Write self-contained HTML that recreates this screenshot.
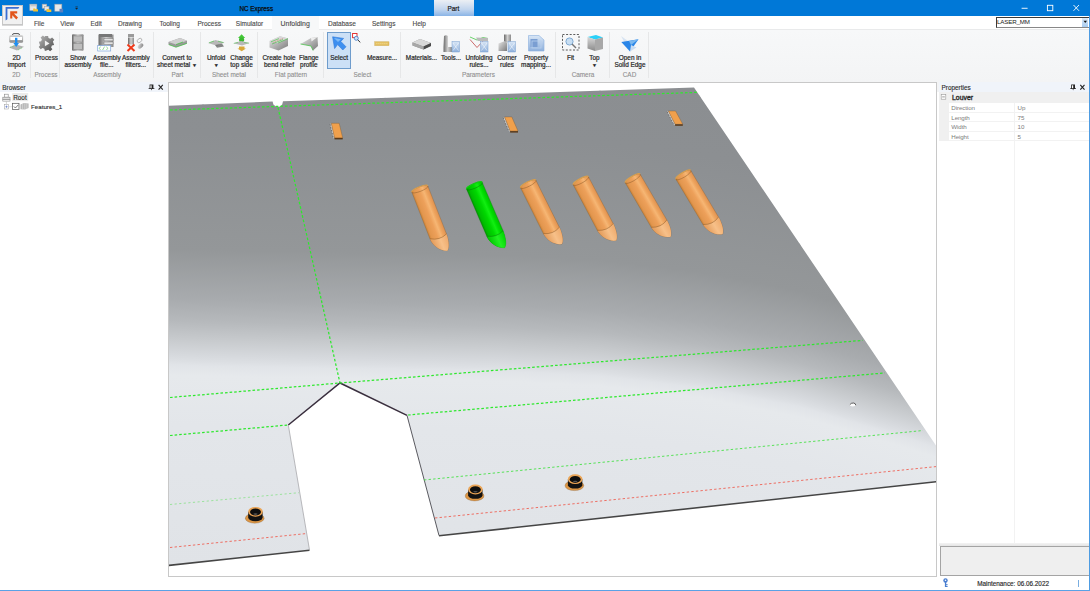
<!DOCTYPE html>
<html><head><meta charset="utf-8"><title>NC Express</title>
<style>*{margin:0;padding:0;box-sizing:border-box}
html,body{width:1090px;height:591px;overflow:hidden;background:#fff;font-family:"Liberation Sans",sans-serif;color:#333}
.a{position:absolute;white-space:nowrap;line-height:1}
svg.a{overflow:visible}</style></head><body>
<div class="a" style="left:0;top:0;width:1090px;height:16px;background:#0078d7"></div>
<div class="a" style="left:0;top:16px;width:1090px;height:13px;background:#fff"></div>
<div class="a" style="left:0;top:29px;width:1090px;height:53px;background:linear-gradient(#f7f8f9,#f3f4f5);border-top:1px solid #e9eaeb"></div>
<div class="a" style="left:2px;top:5px;width:21px;height:20px;background:#f1f1f1;border:1px solid #c6c6c6;box-shadow:0 1px 0 #d8d8d8"></div>
<svg class="a" style="left:0;top:0" width="90" height="30">
  <path d="M5.6 7 L19.4 7 L18.2 8.7 L7.4 8.7 L7.4 19.2 L5.6 20.6 Z" fill="#3b6fd3"/>
  <path d="M10.2 11.2 L17.2 11.2 L17.2 13.4 L13.9 13.4 L18 17.6 L16.3 19.4 L12.3 15.3 L12.3 18.6 L10.2 18.6 Z" fill="#e2561c"/>
  <rect x="29.8" y="4.2" width="7" height="6.3" fill="#e9e9e9" stroke="#a8a8a8" stroke-width="0.6"/>
  <rect x="30.5" y="5" width="5.6" height="1.4" fill="#c8c8c8"/>
  <path d="M33.2 8.6 L35 8.6 L35.6 9.2 L38 9.2 L38 11.6 L33.2 11.6 Z" fill="#f2c230"/>
  <rect x="42.2" y="4.2" width="4.5" height="4" fill="#e6e6e6" stroke="#a8a8a8" stroke-width="0.6"/>
  <rect x="44.5" y="6.5" width="4.5" height="4" fill="#e6e6e6" stroke="#a8a8a8" stroke-width="0.6"/>
  <path d="M46.5 9 L48.3 9 L48.9 9.6 L51.3 9.6 L51.3 12 L46.5 12 Z" fill="#f2c230"/>
  <rect x="54.8" y="4.2" width="7" height="7" fill="#e9e9e9" stroke="#a8a8a8" stroke-width="0.6"/>
  <rect x="59.5" y="8.8" width="3.6" height="3.6" fill="#5a7fc0"/>
  <rect x="75.4" y="6.6" width="2.4" height="0.7" fill="#222"/>
  <path d="M75.2 8 L78 8 L76.6 9.8 Z" fill="#222"/>
</svg>
<div class="a" style="left:239.5px;top:6px;font-size:6.3px;color:#0b0b0b;-webkit-text-stroke:0.25px #0b0b0b">NC Express</div>
<div class="a" style="left:434px;top:0;width:40px;height:16px;background:linear-gradient(#eceff4,#c0d4ee 60%,#8ab4e6)"></div>
<div class="a" style="left:447.5px;top:5.6px;font-size:6.4px;color:#1a1a1a;-webkit-text-stroke:0.2px #1a1a1a">Part</div>
<svg class="a" style="left:1010px;top:0" width="80" height="16">
  <rect x="11.6" y="7.8" width="6" height="0.9" fill="#fff"/>
  <rect x="37.4" y="5.3" width="5.4" height="5.4" fill="none" stroke="#fff" stroke-width="0.9"/>
  <path d="M63.5 5 L69 10.8 M69 5 L63.5 10.8" stroke="#fff" stroke-width="0.9"/>
</svg>
<div class="a" style="left:272px;top:16px;width:47px;height:14px;background:#f7f8f9"></div>
<div class="a" style="left:33.9px;top:21.2px;font-size:6.5px;color:#4a4a4a;-webkit-text-stroke:0.12px #4a4a4a">File</div>
<div class="a" style="left:60.3px;top:21.2px;font-size:6.5px;color:#4a4a4a;-webkit-text-stroke:0.12px #4a4a4a">View</div>
<div class="a" style="left:90.5px;top:21.2px;font-size:6.5px;color:#4a4a4a;-webkit-text-stroke:0.12px #4a4a4a">Edit</div>
<div class="a" style="left:118px;top:21.2px;font-size:6.5px;color:#4a4a4a;-webkit-text-stroke:0.12px #4a4a4a">Drawing</div>
<div class="a" style="left:159.4px;top:21.2px;font-size:6.5px;color:#4a4a4a;-webkit-text-stroke:0.12px #4a4a4a">Tooling</div>
<div class="a" style="left:197.5px;top:21.2px;font-size:6.5px;color:#4a4a4a;-webkit-text-stroke:0.12px #4a4a4a">Process</div>
<div class="a" style="left:235.8px;top:21.2px;font-size:6.5px;color:#4a4a4a;-webkit-text-stroke:0.12px #4a4a4a">Simulator</div>
<div class="a" style="left:328px;top:21.2px;font-size:6.5px;color:#4a4a4a;-webkit-text-stroke:0.12px #4a4a4a">Database</div>
<div class="a" style="left:372px;top:21.2px;font-size:6.5px;color:#4a4a4a;-webkit-text-stroke:0.12px #4a4a4a">Settings</div>
<div class="a" style="left:412.5px;top:21.2px;font-size:6.5px;color:#4a4a4a;-webkit-text-stroke:0.12px #4a4a4a">Help</div>
<div class="a" style="left:280.6px;top:21.2px;font-size:6.9px;color:#4a4a4a;-webkit-text-stroke:0.12px #4a4a4a">Unfolding</div>
<div class="a" style="left:996px;top:16.5px;width:94px;height:11px;background:#fff;border:1px solid #3a3a3a;border-right:none;border-bottom-color:#888"></div>
<div class="a" style="left:1082px;top:17.5px;width:6px;height:9px;background:linear-gradient(#d8e8f8,#a8cbef)"></div>
<svg class="a" style="left:1083px;top:20px" width="5" height="4"><path d="M0.5 0.8 L4 0.8 L2.25 3 Z" fill="#111"/></svg>
<div class="a" style="left:997px;top:19px;font-size:6.2px;color:#1a1a1a;letter-spacing:-0.15px">LASER_MM</div>
<div class="a" style="left:327px;top:32px;width:24px;height:37px;background:#cce0f6;border:1px solid #6e9ccc"></div>
<div class="a" style="left:-13.5px;top:53.6px;width:60px;text-align:center;font-size:6.4px;line-height:7.2px;color:#262626;-webkit-text-stroke:0.2px #262626">2D<br>Import</div>
<div class="a" style="left:16.5px;top:53.6px;width:60px;text-align:center;font-size:6.4px;line-height:7.2px;color:#262626;-webkit-text-stroke:0.2px #262626">Process</div>
<div class="a" style="left:48.0px;top:53.6px;width:60px;text-align:center;font-size:6.4px;line-height:7.2px;color:#262626;-webkit-text-stroke:0.2px #262626">Show<br>assembly</div>
<div class="a" style="left:76.8px;top:53.6px;width:60px;text-align:center;font-size:6.4px;line-height:7.2px;color:#262626;-webkit-text-stroke:0.2px #262626">Assembly<br>file...</div>
<div class="a" style="left:105.8px;top:53.6px;width:60px;text-align:center;font-size:6.4px;line-height:7.2px;color:#262626;-webkit-text-stroke:0.2px #262626">Assembly<br>filters...</div>
<div class="a" style="left:147.0px;top:53.6px;width:60px;text-align:center;font-size:6.4px;line-height:7.2px;color:#262626;-webkit-text-stroke:0.2px #262626">Convert to<br>sheet metal <span style="font-size:5px">&#9660;</span></div>
<div class="a" style="left:186.2px;top:53.6px;width:60px;text-align:center;font-size:6.4px;line-height:7.2px;color:#262626;-webkit-text-stroke:0.2px #262626">Unfold<br><span style="font-size:5px">&#9660;</span></div>
<div class="a" style="left:211.5px;top:53.6px;width:60px;text-align:center;font-size:6.4px;line-height:7.2px;color:#262626;-webkit-text-stroke:0.2px #262626">Change<br>top side</div>
<div class="a" style="left:249.0px;top:53.6px;width:60px;text-align:center;font-size:6.4px;line-height:7.2px;color:#262626;-webkit-text-stroke:0.2px #262626">Create hole<br>bend relief</div>
<div class="a" style="left:278.8px;top:53.6px;width:60px;text-align:center;font-size:6.4px;line-height:7.2px;color:#262626;-webkit-text-stroke:0.2px #262626">Flange<br>profile</div>
<div class="a" style="left:309.1px;top:53.6px;width:60px;text-align:center;font-size:6.4px;line-height:7.2px;color:#262626;-webkit-text-stroke:0.2px #262626">Select</div>
<div class="a" style="left:352.0px;top:53.6px;width:60px;text-align:center;font-size:6.4px;line-height:7.2px;color:#262626;-webkit-text-stroke:0.2px #262626">Measure...</div>
<div class="a" style="left:391.5px;top:53.6px;width:60px;text-align:center;font-size:6.4px;line-height:7.2px;color:#262626;-webkit-text-stroke:0.2px #262626">Materials...</div>
<div class="a" style="left:421.0px;top:53.6px;width:60px;text-align:center;font-size:6.4px;line-height:7.2px;color:#262626;-webkit-text-stroke:0.2px #262626">Tools...</div>
<div class="a" style="left:449.0px;top:53.6px;width:60px;text-align:center;font-size:6.4px;line-height:7.2px;color:#262626;-webkit-text-stroke:0.2px #262626">Unfolding<br>rules...</div>
<div class="a" style="left:477.0px;top:53.6px;width:60px;text-align:center;font-size:6.4px;line-height:7.2px;color:#262626;-webkit-text-stroke:0.2px #262626">Corner<br>rules</div>
<div class="a" style="left:506.0px;top:53.6px;width:60px;text-align:center;font-size:6.4px;line-height:7.2px;color:#262626;-webkit-text-stroke:0.2px #262626">Property<br>mapping...</div>
<div class="a" style="left:540.6px;top:53.6px;width:60px;text-align:center;font-size:6.4px;line-height:7.2px;color:#262626;-webkit-text-stroke:0.2px #262626">Fit</div>
<div class="a" style="left:564.5px;top:53.6px;width:60px;text-align:center;font-size:6.4px;line-height:7.2px;color:#262626;-webkit-text-stroke:0.2px #262626">Top<br><span style="font-size:5px">&#9660;</span></div>
<div class="a" style="left:600.0px;top:53.6px;width:60px;text-align:center;font-size:6.4px;line-height:7.2px;color:#262626;-webkit-text-stroke:0.2px #262626">Open in<br>Solid Edge</div>
<div class="a" style="left:-13.7px;top:72.2px;width:60px;text-align:center;font-size:6.4px;color:#8f8f8f;-webkit-text-stroke:0.1px #8f8f8f">2D</div>
<div class="a" style="left:16.0px;top:72.2px;width:60px;text-align:center;font-size:6.4px;color:#8f8f8f;-webkit-text-stroke:0.1px #8f8f8f">Process</div>
<div class="a" style="left:77.0px;top:72.2px;width:60px;text-align:center;font-size:6.4px;color:#8f8f8f;-webkit-text-stroke:0.1px #8f8f8f">Assembly</div>
<div class="a" style="left:147.4px;top:72.2px;width:60px;text-align:center;font-size:6.4px;color:#8f8f8f;-webkit-text-stroke:0.1px #8f8f8f">Part</div>
<div class="a" style="left:199.0px;top:72.2px;width:60px;text-align:center;font-size:6.4px;color:#8f8f8f;-webkit-text-stroke:0.1px #8f8f8f">Sheet metal</div>
<div class="a" style="left:261.0px;top:72.2px;width:60px;text-align:center;font-size:6.4px;color:#8f8f8f;-webkit-text-stroke:0.1px #8f8f8f">Flat pattern</div>
<div class="a" style="left:332.5px;top:72.2px;width:60px;text-align:center;font-size:6.4px;color:#8f8f8f;-webkit-text-stroke:0.1px #8f8f8f">Select</div>
<div class="a" style="left:448.4px;top:72.2px;width:60px;text-align:center;font-size:6.4px;color:#8f8f8f;-webkit-text-stroke:0.1px #8f8f8f">Parameters</div>
<div class="a" style="left:553.0px;top:72.2px;width:60px;text-align:center;font-size:6.4px;color:#8f8f8f;-webkit-text-stroke:0.1px #8f8f8f">Camera</div>
<div class="a" style="left:599.5px;top:72.2px;width:60px;text-align:center;font-size:6.4px;color:#8f8f8f;-webkit-text-stroke:0.1px #8f8f8f">CAD</div>
<div class="a" style="left:30.2px;top:32px;width:1px;height:46px;background:#e6e7e8"></div>
<div class="a" style="left:58.7px;top:32px;width:1px;height:46px;background:#e6e7e8"></div>
<div class="a" style="left:152.9px;top:32px;width:1px;height:46px;background:#e6e7e8"></div>
<div class="a" style="left:199.9px;top:32px;width:1px;height:46px;background:#e6e7e8"></div>
<div class="a" style="left:256.8px;top:32px;width:1px;height:46px;background:#e6e7e8"></div>
<div class="a" style="left:322.9px;top:32px;width:1px;height:46px;background:#e6e7e8"></div>
<div class="a" style="left:400.0px;top:32px;width:1px;height:46px;background:#e6e7e8"></div>
<div class="a" style="left:554.9px;top:32px;width:1px;height:46px;background:#e6e7e8"></div>
<div class="a" style="left:608.9px;top:32px;width:1px;height:46px;background:#e6e7e8"></div>
<div class="a" style="left:648.2px;top:32px;width:1px;height:46px;background:#e6e7e8"></div>
<svg class="a" style="left:0;top:0" width="660" height="82">
<defs>
 <linearGradient id="ig1" x1="0" y1="0" x2="0" y2="1"><stop offset="0" stop-color="#d8d8d8"/><stop offset="1" stop-color="#8a8a8a"/></linearGradient>
 <linearGradient id="ig2" x1="0" y1="0" x2="1" y2="1"><stop offset="0" stop-color="#b8b8b8"/><stop offset="1" stop-color="#4a4a4a"/></linearGradient>
 <linearGradient id="ig3" x1="0" y1="0" x2="1" y2="0"><stop offset="0" stop-color="#6a6a6a"/><stop offset="0.5" stop-color="#d0d0d0"/><stop offset="1" stop-color="#8a8a8a"/></linearGradient>
 <linearGradient id="ig4" x1="0" y1="0" x2="0" y2="1"><stop offset="0" stop-color="#d8e6f6"/><stop offset="1" stop-color="#8eb0dc"/></linearGradient>
 <linearGradient id="ig5" x1="0" y1="0" x2="1" y2="1"><stop offset="0" stop-color="#e8e8e8"/><stop offset="1" stop-color="#7a7a7a"/></linearGradient>
</defs>
<!-- 2D import -->
<path d="M12.5 35 Q12.5 33.6 14 33.6 L18 33.6 Q19.5 33.6 19.5 35" fill="none" stroke="#555" stroke-width="1"/>
<rect x="9.3" y="35" width="13.8" height="7.8" rx="1.5" fill="url(#ig1)"/>
<rect x="10.3" y="37" width="11.8" height="3" fill="#fff"/>
<path d="M9 47.5 L16 44.6 L24 46.8 L17 50.6 Z" fill="#b2b2b2"/>
<path d="M10 47.4 L15.5 45.2 M18 50 L22.5 47.5" stroke="#4dc84d" stroke-width="0.6" stroke-dasharray="1 0.8"/>
<rect x="15" y="37.8" width="2.4" height="6" fill="#1e8ef0"/>
<path d="M13.4 43 L19 43 L16.2 47 Z" fill="#1e8ef0"/>
<!-- process gear -->
<g transform="translate(46.5,43.4)">
<path d="M-1.6,-7.5 L1.6,-7.5 L2,-5.4 L3.8,-4.6 L5.6,-5.9 L7.8,-3.6 L6.4,-1.8 L7.1,0 L7.6,1.6 L5.4,2.2 L4.6,4 L5.9,5.8 L3.6,7.8 L1.8,6.4 L0,7.1 L-1.6,7.6 L-2.2,5.4 L-4,4.6 L-5.8,5.9 L-7.8,3.6 L-6.4,1.8 L-7.1,0 L-7.6,-1.6 L-5.4,-2.2 L-4.6,-4 L-5.9,-5.8 L-3.6,-7.8 L-1.8,-6.4 Z" fill="url(#ig2)"/>
<path d="M-1.6,-2.8 L3,0 L-1.6,2.8 Z" fill="#f2f2f2"/>
</g>
<!-- show assembly cabinet -->
<rect x="72" y="34.3" width="11.6" height="16.5" rx="1" fill="url(#ig3)"/>
<rect x="73.3" y="36" width="9" height="6" fill="#bdbdbd" stroke="#777" stroke-width="0.4"/>
<rect x="73.3" y="43.5" width="9" height="6" fill="#bdbdbd" stroke="#777" stroke-width="0.4"/>
<!-- assembly file -->
<rect x="98.5" y="34.5" width="15" height="12.5" fill="url(#ig3)"/>
<rect x="99" y="34" width="13" height="3" fill="#777"/>
<rect x="104" y="38.5" width="9" height="2.4" fill="#e4e4e4" stroke="#666" stroke-width="0.4"/>
<rect x="104" y="42" width="9" height="2.4" fill="#e4e4e4" stroke="#666" stroke-width="0.4"/>
<rect x="97.7" y="45.6" width="13" height="5.4" fill="#fff" stroke="#7ea6da" stroke-width="0.7"/>
<path d="M100.5 46.6 L99.3 48.3 L100.5 50 M102.6 50 L104.6 46.6 M106.5 46.6 L107.7 48.3 L106.5 50" stroke="#55c055" stroke-width="0.6" fill="none"/>
<!-- assembly filters -->
<rect x="128" y="34" width="6" height="3" fill="#9a9a9a"/>
<rect x="128" y="37.5" width="6" height="7" fill="url(#ig3)"/>
<path d="M127.5 44.5 L134.5 51 M134.5 44.5 L127.5 51" stroke="#ee3a1a" stroke-width="2"/>
<ellipse cx="139.5" cy="40.5" rx="2.6" ry="1.8" fill="none" stroke="#aaa" stroke-width="0.8" transform="rotate(-40 139.5 40.5)"/>
<ellipse cx="140.5" cy="46" rx="3.2" ry="2" fill="url(#ig5)" transform="rotate(-40 140.5 46)"/>
<!-- convert to sheet metal -->
<path d="M168.5 42 L180 38 L187 40.8 L187 43.5 L176 47.3 L168.5 44.6 Z" fill="#9a9a9a"/>
<path d="M168.5 42 L180 38 L187 40.8 L176 44.6 Z" fill="#cfcfcf"/>
<path d="M168.8 44.6 L176 47.2 L186.8 43.4 M176 44.6 L183 42" stroke="#3cc03c" stroke-width="0.7" fill="none"/>
<!-- unfold -->
<path d="M208 43 L215.5 40 L224.5 42.5 L217 45.8 Z" fill="#b8b8b8"/>
<path d="M215 45 L222 43.8 L224 46.5 L217 47.8 Z" fill="#555" opacity="0.7"/>
<path d="M209 42.8 L214 41 M218 41.2 L223.5 42.6" stroke="#4ac84a" stroke-width="0.6" fill="none"/>
<!-- change top side -->
<path d="M241.6 34.2 L245.2 38 L243.3 38 L243.3 41.5 L239.9 41.5 L239.9 38 L238 38 Z" fill="#44c838"/>
<ellipse cx="241.6" cy="39.8" rx="2.6" ry="2.4" fill="#3ab830"/>
<path d="M233.5 43.2 L241 41 L249.5 43 L242 45.5 Z" fill="#b8b8b8"/>
<path d="M233.8 43.4 L238 42.3 M244 42.5 L249 43.2" stroke="#4ac84a" stroke-width="0.5"/>
<path d="M239 46.5 L244.5 46.5 L244.5 48.5 L246 48.5 L241.7 51.2 L237.4 48.5 L239 48.5 Z" fill="#d8a838"/>
<!-- create hole bend relief -->
<path d="M269.5 41 L280 36.3 L288 38.6 L288 46 L278.5 50.5 L269.5 47.5 Z" fill="url(#ig5)"/>
<path d="M269.5 41 L280 36.3 L288 38.6 L278 43 Z" fill="#d8d8d8"/>
<path d="M278 43 L288 38.6 M272 44 L283 39.5 M271 41.8 L279 38.6" stroke="#3cc03c" stroke-width="0.6"/>
<path d="M273.5 42.2 L283 38.4" stroke="#e05050" stroke-width="0.5" stroke-dasharray="1 0.8"/>
<!-- flange profile -->
<path d="M300.5 44 L311 38 L317.5 37 L318 46 L313 50.5 L311 46 Z" fill="url(#ig5)"/>
<path d="M300.5 44 L311 46 L313 50.5" stroke="#3cc03c" stroke-width="0.7" fill="none"/>
<path d="M311 38 L317.5 37 L311.5 41.5 Z" fill="#eee"/>
<!-- select cursor -->
<path d="M332.6 36.8 L343.6 38.4 L340.8 41.4 L346 46.8 L342.8 50 L337.6 44.6 L334.6 48.6 Z" fill="#3d8ff0" stroke="#2f78d8" stroke-width="0.6" stroke-linejoin="round"/>
<path d="M334 38 L341 39.2 L338 42 Z" fill="#8cc4fa" opacity="0.8"/>
<!-- zoom select small -->
<rect x="352.6" y="33.5" width="4.4" height="4.2" fill="#fff" stroke="#e02020" stroke-width="0.9"/>
<circle cx="356.3" cy="38.3" r="2" fill="#cfe2f5" stroke="#3a78c8" stroke-width="0.8"/>
<path d="M357.7 39.8 L360.3 42.4" stroke="#333" stroke-width="1"/>
<!-- measure ruler -->
<rect x="374.8" y="41.8" width="14.2" height="3.8" fill="#e4c062" stroke="#c8a040" stroke-width="0.4"/>
<path d="M376.5 43.6 H388" stroke="#fff8d8" stroke-width="0.6" stroke-dasharray="0.8 1.2"/>
<!-- materials -->
<path d="M412.5 42.5 L420 39 L431 43 L431 46 L423.5 49.5 L412.5 45.5 Z" fill="#8a8a8a"/>
<path d="M412.5 42.5 L420 39 L431 43 L423.5 46.5 Z" fill="#d8d8d8"/>
<path d="M423.5 46.5 L431 43 L431 46 L423.5 49.5 Z" fill="#4a4a4a"/>
<path d="M412.5 42.5 L423.5 46.5 L423.5 49.5 L412.5 45.5 Z" fill="#a8a8a8"/>
<!-- tools -->
<path d="M444 36 Q446 34.5 448 36 L448 47 L452 47 L452 52 L443.5 52 L443.5 47 Z" fill="url(#ig3)"/>
<rect x="452" y="41.5" width="7.5" height="10.5" fill="url(#ig4)" stroke="#7aa0d0" stroke-width="0.5"/>
<path d="M453 43 L458.5 50.5 M458.5 43 L453 50.5" stroke="#fff" stroke-width="0.5"/>
<!-- unfolding rules -->
<path d="M470 37 L477 40 L483 37.5 L488 38.5" stroke="#4ac84a" stroke-width="0.8" fill="none"/>
<path d="M470 39.5 L477 47.5 L484 40" stroke="#c04848" stroke-width="0.8" fill="none"/>
<path d="M476 37.5 L488 38 L488 41 L478 41 Z" fill="#bbb"/>
<rect x="480.5" y="41.5" width="7.5" height="10.5" fill="url(#ig4)" stroke="#7aa0d0" stroke-width="0.5"/>
<path d="M481.5 43 L487 50.5 M487 43 L481.5 50.5" stroke="#fff" stroke-width="0.5"/>
<!-- corner rules -->
<rect x="504" y="34.5" width="7" height="8" fill="url(#ig3)"/>
<path d="M498.5 43.5 L505 41 L507 43 L507 51 L498.5 51 Z" fill="url(#ig5)"/>
<rect x="508" y="41.5" width="7.5" height="10.5" fill="url(#ig4)" stroke="#7aa0d0" stroke-width="0.5"/>
<path d="M509 43 L514.5 50.5 M514.5 43 L509 50.5" stroke="#fff" stroke-width="0.5"/>
<!-- property mapping -->
<path d="M528.5 35.5 L539 35.5 L544 40 L544 51 L528.5 51 Z" fill="url(#ig4)" stroke="#8aaede" stroke-width="0.6"/>
<rect x="530.5" y="39" width="7" height="8" fill="#7a9ed2"/>
<rect x="532" y="41" width="9" height="7" fill="none" stroke="#b8d0ee" stroke-width="0.8"/>
<!-- fit -->
<rect x="562.5" y="34.5" width="16.5" height="15.5" fill="none" stroke="#333" stroke-width="0.8" stroke-dasharray="2 1.6"/>
<circle cx="569.5" cy="41.5" r="3.6" fill="#c8def2" stroke="#6a9ccc" stroke-width="0.8"/>
<path d="M572 44 L576 48" stroke="#777" stroke-width="1.4"/>
<!-- top cube -->
<path d="M587.5 37 L596 35 L603 37.5 L595 39.5 Z" fill="#2ad0f8"/>
<path d="M587.5 37 L595 39.5 L595 51 L587.5 48.5 Z" fill="url(#ig1)"/>
<path d="M595 39.5 L603 37.5 L603 49 L595 51 Z" fill="#a8a8a8"/>
<!-- solid edge -->
<path d="M621 36 L629.5 42 L624.5 42.5 Z" fill="#d8e4f2"/>
<path d="M621.3 42 L638.5 39.2 L630 51.5 Z" fill="#2a86e8"/>
<path d="M629 41 L638.5 39.2 L631 45 Z" fill="#7ab8f0"/>
<path d="M631 45 L636.5 47.5 L630 51.5 Z" fill="#c8dcf2"/>
</svg>
<div class="a" style="left:0;top:82px;width:167px;height:10px;background:#f0f4fa"></div>
<div class="a" style="left:2.3px;top:84.8px;font-size:6.4px;color:#2a2a2a;-webkit-text-stroke:0.12px #2a2a2a">Browser</div>
<div class="a" style="left:0;top:92px;width:169px;height:498px;background:#fff"></div>
<svg class="a" style="left:0;top:80px" width="170" height="40">
  <path d="M149.6 4.6 L153.4 4.6 L153.4 8.2 L154.4 8.2 L154.4 9 L152 9 L151.5 10.4 L151 9 L148.6 9 L148.6 8.2 L149.6 8.2 Z" fill="#222"/>
  <rect x="150.4" y="5.3" width="1.2" height="2.9" fill="#fff"/>
  <path d="M158.6 4.8 L162.8 9.6 M162.8 4.8 L158.6 9.6" stroke="#222" stroke-width="1.1"/>
  <!-- root icon -->
  <rect x="4.6" y="14.2" width="3.6" height="3" fill="#fff" stroke="#888" stroke-width="0.6"/>
  <rect x="2.8" y="17.2" width="7.2" height="2.4" fill="#ddd" stroke="#888" stroke-width="0.6"/>
  <rect x="2.8" y="19.6" width="7.2" height="1.5" fill="#fff" stroke="#888" stroke-width="0.6"/>
  <path d="M6.4 21.4 L6.4 24.4" stroke="#aaa" stroke-width="0.5"/>
  <rect x="12.2" y="13" width="16" height="8.2" fill="#ebebeb"/>
  <!-- plus box -->
  <rect x="4.3" y="24.4" width="4.4" height="4.6" fill="#fff" stroke="#9a9a9a" stroke-width="0.5"/>
  <path d="M5.3 26.7 H7.7 M6.5 25.5 V27.9" stroke="#3a5ab8" stroke-width="0.5"/>
  <path d="M8.7 26.7 H12.3" stroke="#bbb" stroke-width="0.4"/>
  <!-- checkbox -->
  <rect x="12.6" y="23.3" width="6.4" height="6.3" fill="#fff" stroke="#555" stroke-width="0.7"/>
  <path d="M13.8 26.4 L15.4 28 L18.4 24.8" stroke="#444" stroke-width="0.7" fill="none"/>
  <!-- features icon -->
  <path d="M20.5 24.5 L24 23 L28.6 23.5 L28.6 28 L25 29.6 L20.5 29.2 Z" fill="#b8b8b8"/>
  <path d="M22.5 23.8 L22.5 29.3 M24.8 23.2 L24.8 29.5 M26.8 23.4 L26.8 28.8" stroke="#e4e4e4" stroke-width="0.5"/>
</svg>
<div class="a" style="left:13.2px;top:94.6px;font-size:6.4px;color:#2a2a2a;-webkit-text-stroke:0.12px #2a2a2a">Root</div>
<div class="a" style="left:31px;top:103.6px;font-size:6.2px;color:#2a2a2a;-webkit-text-stroke:0.12px #2a2a2a">Features_1</div>
<div class="a" style="left:167px;top:82px;width:2px;height:10px;background:#f3f4f5"></div>
<div class="a" style="left:937px;top:82px;width:2px;height:10px;background:#f3f4f5"></div>
<div class="a" style="left:939px;top:82px;width:150px;height:10px;background:#f0f4fa"></div>
<div class="a" style="left:941.5px;top:84.8px;font-size:6.4px;color:#2a2a2a;-webkit-text-stroke:0.12px #2a2a2a">Properties</div>
<svg class="a" style="left:1060px;top:80px" width="30" height="14"><path d="M11.2 4.6 L15 4.6 L15 8.2 L16 8.2 L16 9 L13.6 9 L13.1 10.4 L12.6 9 L10.2 9 L10.2 8.2 L11.2 8.2 Z" fill="#222"/><rect x="12" y="5.3" width="1.2" height="2.9" fill="#fff"/><path d="M20.3 4.8 L24.5 9.6 M24.5 4.8 L20.3 9.6" stroke="#222" stroke-width="1.1"/></svg>
<div class="a" style="left:939px;top:92px;width:150px;height:454px;background:#fff"></div>
<div class="a" style="left:939px;top:92px;width:150px;height:10.5px;background:#f0f0f0"></div>
<div class="a" style="left:939px;top:102.5px;width:9.5px;height:38px;background:#f0f0f0"></div>
<div class="a" style="left:948.5px;top:111.6px;width:141px;height:0.6px;background:#f2f2f2"></div>
<div class="a" style="left:951.3px;top:105.0px;font-size:6.2px;color:#7d7d7d;letter-spacing:-0.1px">Direction</div>
<div class="a" style="left:1017.6px;top:105.0px;font-size:6.2px;color:#7d7d7d;">Up</div>
<div class="a" style="left:948.5px;top:121.1px;width:141px;height:0.6px;background:#f2f2f2"></div>
<div class="a" style="left:951.3px;top:114.5px;font-size:6.2px;color:#7d7d7d;letter-spacing:-0.1px">Length</div>
<div class="a" style="left:1017.6px;top:114.5px;font-size:6.2px;color:#7d7d7d;">75</div>
<div class="a" style="left:948.5px;top:130.7px;width:141px;height:0.6px;background:#f2f2f2"></div>
<div class="a" style="left:951.3px;top:124.1px;font-size:6.2px;color:#7d7d7d;letter-spacing:-0.1px">Width</div>
<div class="a" style="left:1017.6px;top:124.1px;font-size:6.2px;color:#7d7d7d;">10</div>
<div class="a" style="left:948.5px;top:140.2px;width:141px;height:0.6px;background:#f2f2f2"></div>
<div class="a" style="left:951.3px;top:133.6px;font-size:6.2px;color:#7d7d7d;letter-spacing:-0.1px">Height</div>
<div class="a" style="left:1017.6px;top:133.6px;font-size:6.2px;color:#7d7d7d;">5</div>
<div class="a" style="left:1014px;top:102.5px;width:0.6px;height:445px;background:#f2f2f2"></div>
<svg class="a" style="left:939px;top:92px" width="12" height="12"><rect x="2.2" y="2.6" width="4.6" height="4.6" fill="#fff" stroke="#999" stroke-width="0.6"/><path d="M3.2 4.9 H5.8" stroke="#555" stroke-width="0.6"/></svg>
<div class="a" style="left:952px;top:94.6px;font-size:6.9px;color:#2a2a2a;-webkit-text-stroke:0.35px #2a2a2a">Louver</div>
<div class="a" style="left:939px;top:543px;width:150px;height:3px;background:linear-gradient(#f4f4f4,#e4e4e4)"></div>
<div class="a" style="left:940px;top:546px;width:149px;height:30px;background:#efefef;border:1px solid #a4a4a4;border-right:none"></div>
<div class="a" style="left:169px;top:577px;width:921px;height:13px;background:#fff"></div>
<svg class="a" style="left:940px;top:576px" width="12" height="14">
  <circle cx="5.5" cy="4.5" r="2.2" fill="#4a7ed0"/>
  <rect x="4.9" y="5.5" width="1.3" height="5.5" fill="#4a7ed0"/>
  <rect x="6" y="8.2" width="1.6" height="1" fill="#4a7ed0"/><rect x="6" y="10" width="1.6" height="1" fill="#4a7ed0"/>
  <circle cx="5.5" cy="4.3" r="0.8" fill="#fff"/>
</svg>
<div class="a" style="left:977.2px;top:580.8px;font-size:6.36px;color:#2a2a2a;-webkit-text-stroke:0.15px #2a2a2a">Maintenance: 06.06.2022</div>
<div class="a" style="left:1078px;top:580px;width:0.8px;height:7px;background:#7aaee0"></div>
<div class="a" style="left:1089px;top:16px;width:1px;height:575px;background:#4e9ce2"></div>
<div class="a" style="left:0;top:590px;width:1090px;height:1px;background:#5aa2e6"></div>
<div class="a" style="left:168px;top:82px;width:769px;height:495px;background:#fff;border:1px solid #c8c8c8"></div>
<svg class="a" style="left:0;top:0" width="1090" height="591" viewBox="0 0 1090 591">
<defs>
<clipPath id="vp"><rect x="169" y="83" width="767" height="493"/></clipPath>
<linearGradient id="sg0" gradientUnits="userSpaceOnUse" x1="150.00" y1="64.00" x2="131.16" y2="563.29"><stop offset="0.0000" stop-color="#8b8e91"/><stop offset="0.1340" stop-color="#8c8f92"/><stop offset="0.3680" stop-color="#949799"/><stop offset="0.4680" stop-color="#a8abae"/><stop offset="0.5120" stop-color="#b6b9bc"/><stop offset="0.5480" stop-color="#c7cacd"/><stop offset="0.5800" stop-color="#d6d9dd"/><stop offset="0.5920" stop-color="#dcdfe3"/><stop offset="0.6000" stop-color="#e1e4e8"/><stop offset="0.6200" stop-color="#e6e9ec"/><stop offset="0.7200" stop-color="#e3e6ea"/><stop offset="1.0000" stop-color="#e0e3e7"/></linearGradient>
<linearGradient id="sg1" gradientUnits="userSpaceOnUse" x1="203.00" y1="66.00" x2="194.76" y2="565.86"><stop offset="0.0000" stop-color="#8b8e91"/><stop offset="0.1340" stop-color="#8c8f92"/><stop offset="0.3680" stop-color="#949799"/><stop offset="0.4680" stop-color="#a8abae"/><stop offset="0.5120" stop-color="#b6b9bc"/><stop offset="0.5480" stop-color="#c7cacd"/><stop offset="0.5800" stop-color="#d6d9dd"/><stop offset="0.5920" stop-color="#dcdfe3"/><stop offset="0.6000" stop-color="#e1e4e8"/><stop offset="0.6200" stop-color="#e6e9ec"/><stop offset="0.7200" stop-color="#e3e6ea"/><stop offset="1.0000" stop-color="#e0e3e7"/></linearGradient>
<linearGradient id="sg2" gradientUnits="userSpaceOnUse" x1="385.00" y1="69.00" x2="376.31" y2="568.85"><stop offset="0.0000" stop-color="#8b8e91"/><stop offset="0.1340" stop-color="#8c8f92"/><stop offset="0.3680" stop-color="#949799"/><stop offset="0.4680" stop-color="#a8abae"/><stop offset="0.5120" stop-color="#b6b9bc"/><stop offset="0.5480" stop-color="#c7cacd"/><stop offset="0.5800" stop-color="#d6d9dd"/><stop offset="0.5920" stop-color="#dcdfe3"/><stop offset="0.6000" stop-color="#e1e4e8"/><stop offset="0.6200" stop-color="#e6e9ec"/><stop offset="0.7200" stop-color="#e3e6ea"/><stop offset="1.0000" stop-color="#e0e3e7"/></linearGradient>
<linearGradient id="sg3" gradientUnits="userSpaceOnUse" x1="500.00" y1="71.00" x2="475.06" y2="569.75"><stop offset="0.0000" stop-color="#8b8e91"/><stop offset="0.1340" stop-color="#8c8f92"/><stop offset="0.3680" stop-color="#949799"/><stop offset="0.4680" stop-color="#a8abae"/><stop offset="0.5120" stop-color="#b6b9bc"/><stop offset="0.5480" stop-color="#c7cacd"/><stop offset="0.5800" stop-color="#d6d9dd"/><stop offset="0.5920" stop-color="#dcdfe3"/><stop offset="0.6000" stop-color="#e1e4e8"/><stop offset="0.6200" stop-color="#e6e9ec"/><stop offset="0.7200" stop-color="#e3e6ea"/><stop offset="1.0000" stop-color="#e0e3e7"/></linearGradient>
<linearGradient id="sg4" gradientUnits="userSpaceOnUse" x1="600.00" y1="76.00" x2="540.85" y2="568.90"><stop offset="0.0000" stop-color="#8b8e91"/><stop offset="0.1340" stop-color="#8c8f92"/><stop offset="0.3680" stop-color="#949799"/><stop offset="0.4680" stop-color="#a8abae"/><stop offset="0.5120" stop-color="#b6b9bc"/><stop offset="0.5480" stop-color="#c7cacd"/><stop offset="0.5800" stop-color="#d6d9dd"/><stop offset="0.5920" stop-color="#dcdfe3"/><stop offset="0.6000" stop-color="#e1e4e8"/><stop offset="0.6200" stop-color="#e6e9ec"/><stop offset="0.7200" stop-color="#e3e6ea"/><stop offset="1.0000" stop-color="#e0e3e7"/></linearGradient>
<linearGradient id="sg5" gradientUnits="userSpaceOnUse" x1="700.00" y1="88.00" x2="608.31" y2="570.58"><stop offset="0.0000" stop-color="#8b8e91"/><stop offset="0.1340" stop-color="#8c8f92"/><stop offset="0.3680" stop-color="#949799"/><stop offset="0.4680" stop-color="#a8abae"/><stop offset="0.5120" stop-color="#b6b9bc"/><stop offset="0.5480" stop-color="#c7cacd"/><stop offset="0.5800" stop-color="#d6d9dd"/><stop offset="0.5920" stop-color="#dcdfe3"/><stop offset="0.6000" stop-color="#e1e4e8"/><stop offset="0.6200" stop-color="#e6e9ec"/><stop offset="0.7200" stop-color="#e3e6ea"/><stop offset="1.0000" stop-color="#e0e3e7"/></linearGradient>
<linearGradient id="sg6" gradientUnits="userSpaceOnUse" x1="800.00" y1="107.00" x2="666.25" y2="568.21"><stop offset="0.0000" stop-color="#8b8e91"/><stop offset="0.1340" stop-color="#8c8f92"/><stop offset="0.3680" stop-color="#949799"/><stop offset="0.4680" stop-color="#a8abae"/><stop offset="0.5120" stop-color="#b6b9bc"/><stop offset="0.5480" stop-color="#c7cacd"/><stop offset="0.5800" stop-color="#d6d9dd"/><stop offset="0.5920" stop-color="#dcdfe3"/><stop offset="0.6000" stop-color="#e1e4e8"/><stop offset="0.6200" stop-color="#e6e9ec"/><stop offset="0.7200" stop-color="#e3e6ea"/><stop offset="1.0000" stop-color="#e0e3e7"/></linearGradient>
<linearGradient id="sg7" gradientUnits="userSpaceOnUse" x1="900.00" y1="136.00" x2="756.98" y2="591.05"><stop offset="0.0000" stop-color="#8b8e91"/><stop offset="0.1340" stop-color="#8c8f92"/><stop offset="0.3680" stop-color="#949799"/><stop offset="0.4680" stop-color="#a8abae"/><stop offset="0.5120" stop-color="#b6b9bc"/><stop offset="0.5480" stop-color="#c7cacd"/><stop offset="0.5800" stop-color="#d6d9dd"/><stop offset="0.5920" stop-color="#dcdfe3"/><stop offset="0.6000" stop-color="#e1e4e8"/><stop offset="0.6200" stop-color="#e6e9ec"/><stop offset="0.7200" stop-color="#e3e6ea"/><stop offset="1.0000" stop-color="#e0e3e7"/></linearGradient>

<linearGradient id="lvo" x1="0" x2="1" y1="0" y2="0">
 <stop offset="0" stop-color="#c98238"/><stop offset="0.12" stop-color="#e2964e"/><stop offset="0.45" stop-color="#eda05a"/>
 <stop offset="0.66" stop-color="#f6b674"/><stop offset="0.8" stop-color="#eea45e"/><stop offset="1" stop-color="#e09250"/>
</linearGradient>
<linearGradient id="lvot" x1="0" x2="1" y1="0" y2="0">
 <stop offset="0" stop-color="#e39a58"/><stop offset="0.55" stop-color="#f7c089"/><stop offset="1" stop-color="#eeaa6c"/>
</linearGradient>
<linearGradient id="lvg" x1="0" x2="1" y1="0" y2="0">
 <stop offset="0" stop-color="#009800"/><stop offset="0.12" stop-color="#00bc00"/><stop offset="0.45" stop-color="#00d800"/>
 <stop offset="0.66" stop-color="#12ee12"/><stop offset="0.8" stop-color="#00de00"/><stop offset="1" stop-color="#00c200"/>
</linearGradient>
<linearGradient id="lvgt" x1="0" x2="1" y1="0" y2="0">
 <stop offset="0" stop-color="#00c400"/><stop offset="0.55" stop-color="#22f022"/><stop offset="1" stop-color="#00d400"/>
</linearGradient>
</defs>
<g clip-path="url(#vp)">
<clipPath id="sc"><path d="M160,106 L272.6,101.6 L273.4,104.6 Q277.8,109.6 282.2,104.4 L283,101.3 L694,87.5 L958.7,479 L439,535.5 L407,415.4 L340,383 L288.3,425 L309.5,550 L160,566 Z"/></clipPath><g clip-path="url(#sc)"><rect x="149.5" y="80" width="54.0" height="520" fill="url(#sg0)"/><rect x="202.5" y="80" width="183.0" height="520" fill="url(#sg1)"/><rect x="384.5" y="80" width="116.0" height="520" fill="url(#sg2)"/><rect x="499.5" y="80" width="101.0" height="520" fill="url(#sg3)"/><rect x="599.5" y="80" width="101.0" height="520" fill="url(#sg4)"/><rect x="699.5" y="80" width="101.0" height="520" fill="url(#sg5)"/><rect x="799.5" y="80" width="101.0" height="520" fill="url(#sg6)"/><rect x="899.5" y="80" width="71.0" height="520" fill="url(#sg7)"/></g>
<path d="M160,566.3 L309.5,550.3" stroke="#454545" stroke-width="1.6" fill="none"/>
<path d="M439,535.8 L958.7,479.3" stroke="#454545" stroke-width="1.6" fill="none"/>
<path d="M407,415.4 L340,383 L288.3,425" stroke="#3a2f3e" stroke-width="1.5" fill="none"/>
<path d="M407,415.4 L439,535.5" stroke="#5a5a60" stroke-width="1" fill="none"/>
<path d="M288.3,425 L309.5,550" stroke="#a8a8ac" stroke-width="0.8" fill="none"/>
<path d="M170,110 L697,92.4" fill="none" stroke="#2ee82e" stroke-width="1.25" stroke-dasharray="2.6 2" opacity="1"/>
<path d="M278,107.5 L340,383" fill="none" stroke="#2ee82e" stroke-width="1.25" stroke-dasharray="2.6 2" opacity="1"/>
<path d="M170,397.5 L340,383 L862.7,340.4" fill="none" stroke="#2ee82e" stroke-width="1.25" stroke-dasharray="2.6 2" opacity="1"/>
<path d="M170,435.5 L288,425" fill="none" stroke="#2ee82e" stroke-width="1.25" stroke-dasharray="2.6 2" opacity="1"/>
<path d="M408,415 L884.8,372.9" fill="none" stroke="#2ee82e" stroke-width="1.25" stroke-dasharray="2.6 2" opacity="1"/>
<path d="M170,504.5 L299,492.7" fill="none" stroke="#7fe07f" stroke-width="0.9" stroke-dasharray="2.2 2.4" opacity="0.8"/>
<path d="M424,480 L923,430.5" fill="none" stroke="#3ee03e" stroke-width="1.0" stroke-dasharray="2.4 2.2" opacity="0.85"/>
<path d="M170,547.5 L306,533.6" fill="none" stroke="#f04a3a" stroke-width="0.9" stroke-dasharray="2.4 2.2" opacity="0.85"/>
<path d="M435,518 L937,466.5" fill="none" stroke="#f04a3a" stroke-width="0.9" stroke-dasharray="2.4 2.2" opacity="0.85"/>
<path d="M330.1,124.1 L331.3,123.3 L334.5,137.9 L333.5,138.5 Z" fill="#d8d8d8" opacity="0.9"/><path d="M330.1,124.1 L333.5,138.5" stroke="#333" stroke-width="0.5" stroke-dasharray="1.5 1.5"/>
<path d="M331.3,123.3 L339.2,123.3 L342.7,137.9 L334.5,137.9 Z" fill="#f0a04c" stroke="#7a5a3a" stroke-width="0.4"/>
<path d="M334.5,137.9 L342.7,137.9 L342.7,139.4 L334.5,139.4 Z" fill="#5a3a1a"/>
<path d="M503.3,117.7 L504.5,116.9 L510.1,131.1 L509.1,131.7 Z" fill="#d8d8d8" opacity="0.9"/><path d="M503.3,117.7 L509.1,131.7" stroke="#333" stroke-width="0.5" stroke-dasharray="1.5 1.5"/>
<path d="M504.5,116.9 L511.8,116.9 L518.0,131.1 L510.1,131.1 Z" fill="#f0a04c" stroke="#7a5a3a" stroke-width="0.4"/>
<path d="M510.1,131.1 L518.0,131.1 L518.0,132.6 L510.1,132.6 Z" fill="#5a3a1a"/>
<path d="M667.0999999999999,111.8 L668.3,111 L675.1,124.3 L674.1,124.89999999999999 Z" fill="#d8d8d8" opacity="0.9"/><path d="M667.0999999999999,111.8 L674.1,124.89999999999999" stroke="#333" stroke-width="0.5" stroke-dasharray="1.5 1.5"/>
<path d="M668.3,111 L675.6,111 L682.8,124.3 L675.1,124.3 Z" fill="#f0a04c" stroke="#7a5a3a" stroke-width="0.4"/>
<path d="M675.1,124.3 L682.8,124.3 L682.8,125.8 L675.1,125.8 Z" fill="#5a3a1a"/>
<g transform="translate(419.8,189.0) rotate(-21.25) scale(1,0.963)">
<path d="M-8.6,0 L-8.6,52 C-8.4,60 -3.5,67.5 3.3,70 C5.6,68.5 8.2,63 8.6,53.5 L8.6,0 A8.6,2.2 0 0 0 -8.6,0 Z" fill="url(#lvo)" stroke="#8a5a28" stroke-width="0.3"/>
<path d="M-8.6,52 Q0,57.5 8.6,53.5 C8.2,63 5.6,68.5 3.3,70 C-3.5,67.5 -8.4,60 -8.6,52 Z" fill="url(#lvot)"/>
<path d="M-8.6,52 Q0,57.5 8.6,53.5" fill="none" stroke="#8a5a28" stroke-width="0.45"/>
<path d="M-8.6,0 A8.6,2.2 0 0 1 8.6,0" fill="none" stroke="#d8a050" stroke-width="1.2"/>
<path d="M-8.6,0.3 A8.6,2.2 0 0 0 8.6,0.3" fill="none" stroke="#8a5a28" stroke-width="0.45"/>
</g>
<g transform="translate(474.4,185.8) rotate(-23.31) scale(1,0.983)">
<path d="M-8.6,0 L-8.6,52 C-8.4,60 -3.5,67.5 3.3,70 C5.6,68.5 8.2,63 8.6,53.5 L8.6,0 A8.6,2.2 0 0 0 -8.6,0 Z" fill="url(#lvg)" stroke="#087808" stroke-width="0.3"/>
<path d="M-8.6,52 Q0,57.5 8.6,53.5 C8.2,63 5.6,68.5 3.3,70 C-3.5,67.5 -8.4,60 -8.6,52 Z" fill="url(#lvgt)"/>
<path d="M-8.6,52 Q0,57.5 8.6,53.5" fill="none" stroke="#087808" stroke-width="0.45"/>
<path d="M-8.6,0 A8.6,2.2 0 0 1 8.6,0" fill="none" stroke="#10d010" stroke-width="1.2"/>
<path d="M-8.6,0.3 A8.6,2.2 0 0 0 8.6,0.3" fill="none" stroke="#087808" stroke-width="0.45"/>
</g>
<g transform="translate(528.2,184.0) rotate(-26.51) scale(1,0.983)">
<path d="M-8.6,0 L-8.6,52 C-8.4,60 -3.5,67.5 3.3,70 C5.6,68.5 8.2,63 8.6,53.5 L8.6,0 A8.6,2.2 0 0 0 -8.6,0 Z" fill="url(#lvo)" stroke="#8a5a28" stroke-width="0.3"/>
<path d="M-8.6,52 Q0,57.5 8.6,53.5 C8.2,63 5.6,68.5 3.3,70 C-3.5,67.5 -8.4,60 -8.6,52 Z" fill="url(#lvot)"/>
<path d="M-8.6,52 Q0,57.5 8.6,53.5" fill="none" stroke="#8a5a28" stroke-width="0.45"/>
<path d="M-8.6,0 A8.6,2.2 0 0 1 8.6,0" fill="none" stroke="#d8a050" stroke-width="1.2"/>
<path d="M-8.6,0.3 A8.6,2.2 0 0 0 8.6,0.3" fill="none" stroke="#8a5a28" stroke-width="0.45"/>
</g>
<g transform="translate(580.8,180.8) rotate(-27.90) scale(1,0.990)">
<path d="M-8.6,0 L-8.6,52 C-8.4,60 -3.5,67.5 3.3,70 C5.6,68.5 8.2,63 8.6,53.5 L8.6,0 A8.6,2.2 0 0 0 -8.6,0 Z" fill="url(#lvo)" stroke="#8a5a28" stroke-width="0.3"/>
<path d="M-8.6,52 Q0,57.5 8.6,53.5 C8.2,63 5.6,68.5 3.3,70 C-3.5,67.5 -8.4,60 -8.6,52 Z" fill="url(#lvot)"/>
<path d="M-8.6,52 Q0,57.5 8.6,53.5" fill="none" stroke="#8a5a28" stroke-width="0.45"/>
<path d="M-8.6,0 A8.6,2.2 0 0 1 8.6,0" fill="none" stroke="#d8a050" stroke-width="1.2"/>
<path d="M-8.6,0.3 A8.6,2.2 0 0 0 8.6,0.3" fill="none" stroke="#8a5a28" stroke-width="0.45"/>
</g>
<g transform="translate(632.7,178.5) rotate(-30.26) scale(1,0.991)">
<path d="M-8.6,0 L-8.6,52 C-8.4,60 -3.5,67.5 3.3,70 C5.6,68.5 8.2,63 8.6,53.5 L8.6,0 A8.6,2.2 0 0 0 -8.6,0 Z" fill="url(#lvo)" stroke="#8a5a28" stroke-width="0.3"/>
<path d="M-8.6,52 Q0,57.5 8.6,53.5 C8.2,63 5.6,68.5 3.3,70 C-3.5,67.5 -8.4,60 -8.6,52 Z" fill="url(#lvot)"/>
<path d="M-8.6,52 Q0,57.5 8.6,53.5" fill="none" stroke="#8a5a28" stroke-width="0.45"/>
<path d="M-8.6,0 A8.6,2.2 0 0 1 8.6,0" fill="none" stroke="#d8a050" stroke-width="1.2"/>
<path d="M-8.6,0.3 A8.6,2.2 0 0 0 8.6,0.3" fill="none" stroke="#8a5a28" stroke-width="0.45"/>
</g>
<g transform="translate(683.3,174.8) rotate(-30.83) scale(1,1.015)">
<path d="M-8.6,0 L-8.6,52 C-8.4,60 -3.5,67.5 3.3,70 C5.6,68.5 8.2,63 8.6,53.5 L8.6,0 A8.6,2.2 0 0 0 -8.6,0 Z" fill="url(#lvo)" stroke="#8a5a28" stroke-width="0.3"/>
<path d="M-8.6,52 Q0,57.5 8.6,53.5 C8.2,63 5.6,68.5 3.3,70 C-3.5,67.5 -8.4,60 -8.6,52 Z" fill="url(#lvot)"/>
<path d="M-8.6,52 Q0,57.5 8.6,53.5" fill="none" stroke="#8a5a28" stroke-width="0.45"/>
<path d="M-8.6,0 A8.6,2.2 0 0 1 8.6,0" fill="none" stroke="#d8a050" stroke-width="1.2"/>
<path d="M-8.6,0.3 A8.6,2.2 0 0 0 8.6,0.3" fill="none" stroke="#8a5a28" stroke-width="0.45"/>
</g>
<ellipse cx="254.7" cy="518.2" rx="9.4" ry="5" fill="#dc9645" stroke="#7a5530" stroke-width="0.3"/>
<path d="M248.2,511.8 L248.2,517.8 A7.3,4 0 0 0 262.6,517.8 L262.6,511.8 Z" fill="#121212"/>
<ellipse cx="255.5" cy="511.8" rx="7.3" ry="4.9" fill="#eaa455"/>
<ellipse cx="255.5" cy="512.0" rx="5.5" ry="3.5" fill="#0e0e0e"/>
<ellipse cx="255.5" cy="514.1" rx="2.2" ry="0.8" fill="#9a9a9a" opacity="0.5"/>
<ellipse cx="474.59999999999997" cy="495.9" rx="9.4" ry="5" fill="#dc9645" stroke="#7a5530" stroke-width="0.3"/>
<path d="M468.09999999999997,489.5 L468.09999999999997,495.5 A7.3,4 0 0 0 482.5,495.5 L482.5,489.5 Z" fill="#121212"/>
<ellipse cx="475.4" cy="489.5" rx="7.3" ry="4.9" fill="#eaa455"/>
<ellipse cx="475.4" cy="489.7" rx="5.5" ry="3.5" fill="#0e0e0e"/>
<ellipse cx="475.4" cy="491.8" rx="2.2" ry="0.8" fill="#9a9a9a" opacity="0.5"/>
<ellipse cx="574.4000000000001" cy="485.59999999999997" rx="9.4" ry="5" fill="#dc9645" stroke="#7a5530" stroke-width="0.3"/>
<path d="M567.9000000000001,479.2 L567.9000000000001,485.2 A7.3,4 0 0 0 582.3000000000001,485.2 L582.3000000000001,479.2 Z" fill="#121212"/>
<ellipse cx="575.2" cy="479.2" rx="7.3" ry="4.9" fill="#eaa455"/>
<ellipse cx="575.2" cy="479.4" rx="5.5" ry="3.5" fill="#0e0e0e"/>
<ellipse cx="575.2" cy="481.5" rx="2.2" ry="0.8" fill="#9a9a9a" opacity="0.5"/>
<ellipse cx="852.8" cy="404.8" rx="2.9" ry="1.7" fill="#fdfdfd"/><path d="M849.9,404.6 Q851,402.9 853.5,403 Q855.6,403.2 855.8,405.2" fill="none" stroke="#3a3a3a" stroke-width="0.8"/>
</g></svg>
</body></html>
